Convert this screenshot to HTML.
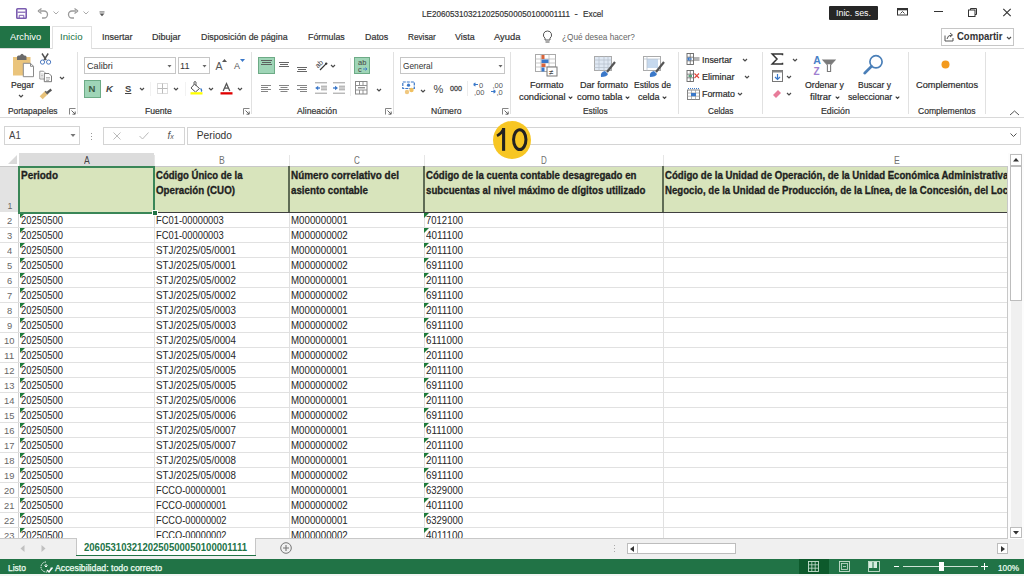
<!DOCTYPE html>
<html><head><meta charset="utf-8"><style>
html,body{margin:0;padding:0;width:1024px;height:576px;overflow:hidden;background:#fff;position:relative;font-family:"Liberation Sans", sans-serif}
.t{position:absolute;white-space:nowrap;font-family:"Liberation Sans", sans-serif}
.s{-webkit-text-stroke:0.2px currentColor}
.r{position:absolute;}
svg.r{overflow:visible}
</style></head><body>
<div class="r" style="left:0px;top:0px;width:1024px;height:26px;background:#fff"></div>
<svg class="r" style="left:16px;top:8px;" width="11" height="11" viewBox="0 0 11 11"><rect x="0.8" y="0.8" width="9.4" height="9.4" rx="0.8" fill="#fff" stroke="#7b5cb0" stroke-width="1.6"/><path d="M1.5 4.2 H9.5" stroke="#7b5cb0" stroke-width="1.2"/><path d="M3.2 10 V7.3 H7.8 V10" fill="none" stroke="#7b5cb0" stroke-width="1"/></svg>
<svg class="r" style="left:37px;top:8px;" width="12" height="11" viewBox="0 0 12 11"><path d="M3 3 H7 A3.5 3.5 0 0 1 7 10 H5" fill="none" stroke="#9a9a9a" stroke-width="1.3"/><path d="M1 3 L4.5 0.5 M1 3 L4.5 5.5" stroke="#9a9a9a" stroke-width="1.3" fill="none"/></svg>
<svg class="r" style="left:53px;top:11px;" width="6" height="4" viewBox="0 0 6 4"><path d="M0.5 0.5 L3 3 L5.5 0.5" fill="none" stroke="#aaa" stroke-width="1"/></svg>
<svg class="r" style="left:67px;top:8px;" width="12" height="11" viewBox="0 0 12 11"><path d="M9 3 H5 A3.5 3.5 0 0 0 5 10 H7" fill="none" stroke="#9a9a9a" stroke-width="1.3"/><path d="M11 3 L7.5 0.5 M11 3 L7.5 5.5" stroke="#9a9a9a" stroke-width="1.3" fill="none"/></svg>
<svg class="r" style="left:83px;top:11px;" width="6" height="4" viewBox="0 0 6 4"><path d="M0.5 0.5 L3 3 L5.5 0.5" fill="none" stroke="#aaa" stroke-width="1"/></svg>
<svg class="r" style="left:99px;top:10.5px;" width="6" height="6" viewBox="0 0 6 6"><rect x="0.5" y="0.5" width="5" height="0.9" fill="#555"/><path d="M0.5 2.5 L5.5 2.5 L3 5.2 Z" fill="#555"/></svg>
<div class="t s" style="left:421.50px;top:9.20px;font-size:9.8px;line-height:9.8px;color:#333;font-weight:normal;transform:scaleX(0.8280);transform-origin:0 0;">LE2060531032120250500050100001111</div>
<div class="t s" style="left:574.60px;top:9.20px;font-size:9.8px;line-height:9.8px;color:#333;font-weight:normal;">-</div>
<div class="t s" style="left:582.60px;top:9.20px;font-size:9.8px;line-height:9.8px;color:#333;font-weight:normal;transform:scaleX(0.8429);transform-origin:0 0;">Excel</div>
<div class="r" style="left:829px;top:6px;width:49px;height:14px;background:#262626;border-radius:1px"></div>
<div class="t" style="left:836.00px;top:9.07px;font-size:8.9px;line-height:8.9px;color:#fff;font-weight:normal;">Inic. ses.</div>
<svg class="r" style="left:897px;top:8px;" width="12" height="8" viewBox="0 0 12 8"><rect x="0.5" y="0.5" width="10" height="6.5" fill="none" stroke="#333" stroke-width="1"/><rect x="0.5" y="0.5" width="10" height="1.8" fill="#333"/><path d="M3.5 5.5 L5.5 3.5 L7.5 5.5" fill="none" stroke="#333" stroke-width="0.9"/></svg>
<div class="r" style="left:934px;top:11px;width:9px;height:1px;background:#333"></div>
<svg class="r" style="left:967px;top:7px;" width="11" height="10" viewBox="0 0 11 10"><rect x="1.5" y="3" width="6.5" height="6.5" fill="none" stroke="#333" stroke-width="1"/><path d="M3.5 3 V1.5 H9.5 V7.5 H8" fill="none" stroke="#333" stroke-width="1"/></svg>
<svg class="r" style="left:1002px;top:8px;" width="10" height="10" viewBox="0 0 10 10"><path d="M1.3 0.8 L8.7 8.2 M8.7 0.8 L1.3 8.2" stroke="#333" stroke-width="1.1"/></svg>
<div class="r" style="left:0px;top:26px;width:50px;height:22px;background:#217346"></div>
<div class="t" style="left:9.50px;top:32.37px;font-size:9.6px;line-height:9.6px;color:#fff;font-weight:normal;transform:scaleX(0.9747);transform-origin:0 0;">Archivo</div>
<div class="r" style="left:52px;top:26px;width:40px;height:23px;background:#fff;border:1px solid #e1e1e1;border-bottom:none;box-sizing:border-box"></div>
<div class="t" style="left:60.30px;top:32.37px;font-size:9.6px;line-height:9.6px;color:#217346;font-weight:normal;transform:scaleX(1.0040);transform-origin:0 0;">Inicio</div>
<div class="t s" style="left:101.90px;top:32.37px;font-size:9.6px;line-height:9.6px;color:#333;font-weight:normal;transform:scaleX(0.9372);transform-origin:0 0;">Insertar</div>
<div class="t s" style="left:151.90px;top:32.37px;font-size:9.6px;line-height:9.6px;color:#333;font-weight:normal;transform:scaleX(0.9404);transform-origin:0 0;">Dibujar</div>
<div class="t s" style="left:201.40px;top:32.37px;font-size:9.6px;line-height:9.6px;color:#333;font-weight:normal;transform:scaleX(0.9220);transform-origin:0 0;">Disposición de página</div>
<div class="t s" style="left:308.00px;top:32.37px;font-size:9.6px;line-height:9.6px;color:#333;font-weight:normal;transform:scaleX(0.9199);transform-origin:0 0;">Fórmulas</div>
<div class="t s" style="left:364.70px;top:32.37px;font-size:9.6px;line-height:9.6px;color:#333;font-weight:normal;transform:scaleX(0.9291);transform-origin:0 0;">Datos</div>
<div class="t s" style="left:407.70px;top:32.37px;font-size:9.6px;line-height:9.6px;color:#333;font-weight:normal;transform:scaleX(0.8543);transform-origin:0 0;">Revisar</div>
<div class="t s" style="left:455.30px;top:32.37px;font-size:9.6px;line-height:9.6px;color:#333;font-weight:normal;transform:scaleX(0.9259);transform-origin:0 0;">Vista</div>
<div class="t s" style="left:494.40px;top:32.37px;font-size:9.6px;line-height:9.6px;color:#333;font-weight:normal;transform:scaleX(0.9762);transform-origin:0 0;">Ayuda</div>
<svg class="r" style="left:542px;top:30px;" width="11" height="14" viewBox="0 0 11 14"><path d="M5.5 1 A4 4 0 0 1 8 8.2 V10 H3 V8.2 A4 4 0 0 1 5.5 1 Z" fill="none" stroke="#555" stroke-width="1"/><path d="M3.5 12 H7.5" stroke="#555" stroke-width="1"/></svg>
<div class="t" style="left:562.30px;top:32.81px;font-size:9.2px;line-height:9.2px;color:#666;font-weight:normal;transform:scaleX(0.8978);transform-origin:0 0;">¿Qué desea hacer?</div>
<div class="r" style="left:941px;top:28px;width:73px;height:18px;background:#fff;border:1px solid #c6c6c6;box-sizing:border-box"></div>
<svg class="r" style="left:944px;top:31px;" width="10" height="11" viewBox="0 0 10 11"><path d="M1 4.5 V10 H9 V7" fill="none" stroke="#555" stroke-width="1"/><path d="M3 8 Q3.5 4 8 4 M6 2 L8.5 4 L6 6" fill="none" stroke="#555" stroke-width="1"/></svg>
<div class="t" style="left:957.00px;top:32.00px;font-size:10.4px;line-height:10.4px;color:#333;font-weight:bold;transform:scaleX(0.9156);transform-origin:0 0;">Compartir</div>
<svg class="r" style="left:1006px;top:36px;" width="6" height="4" viewBox="0 0 6 4"><path d="M1 1 L3 3 L5 1" fill="none" stroke="#4a4a4a" stroke-width="1.2"/></svg>
<div class="r" style="left:0px;top:48px;width:52px;height:1px;background:#d9d9d9"></div>
<div class="r" style="left:92px;top:48px;width:932px;height:1px;background:#d9d9d9"></div>
<div class="r" style="left:0px;top:49px;width:1024px;height:68px;background:#fff"></div>
<div class="r" style="left:0px;top:117px;width:1024px;height:1px;background:#d9d9d9"></div>
<div class="r" style="left:77px;top:52px;width:1px;height:62px;background:#e1e1e1"></div>
<div class="r" style="left:251px;top:52px;width:1px;height:62px;background:#e1e1e1"></div>
<div class="r" style="left:393px;top:52px;width:1px;height:62px;background:#e1e1e1"></div>
<div class="r" style="left:510px;top:52px;width:1px;height:62px;background:#e1e1e1"></div>
<div class="r" style="left:678px;top:52px;width:1px;height:62px;background:#e1e1e1"></div>
<div class="r" style="left:762px;top:52px;width:1px;height:62px;background:#e1e1e1"></div>
<div class="r" style="left:908px;top:52px;width:1px;height:62px;background:#e1e1e1"></div>
<div class="r" style="left:985px;top:52px;width:1px;height:62px;background:#e1e1e1"></div>
<div class="t s" style="left:8.00px;top:107.18px;font-size:9.0px;line-height:9.0px;color:#333;font-weight:normal;transform:scaleX(0.9334);transform-origin:0 0;">Portapapeles</div>
<div class="t s" style="left:144.80px;top:107.18px;font-size:9.0px;line-height:9.0px;color:#333;font-weight:normal;transform:scaleX(0.9566);transform-origin:0 0;">Fuente</div>
<div class="t s" style="left:296.60px;top:107.18px;font-size:9.0px;line-height:9.0px;color:#333;font-weight:normal;transform:scaleX(0.9632);transform-origin:0 0;">Alineación</div>
<div class="t s" style="left:431.00px;top:107.18px;font-size:9.0px;line-height:9.0px;color:#333;font-weight:normal;transform:scaleX(0.9529);transform-origin:0 0;">Número</div>
<div class="t s" style="left:583.00px;top:107.18px;font-size:9.0px;line-height:9.0px;color:#333;font-weight:normal;transform:scaleX(0.9280);transform-origin:0 0;">Estilos</div>
<div class="t s" style="left:708.00px;top:107.18px;font-size:9.0px;line-height:9.0px;color:#333;font-weight:normal;transform:scaleX(0.9067);transform-origin:0 0;">Celdas</div>
<div class="t s" style="left:820.80px;top:107.18px;font-size:9.0px;line-height:9.0px;color:#333;font-weight:normal;transform:scaleX(0.9757);transform-origin:0 0;">Edición</div>
<div class="t s" style="left:918.00px;top:107.18px;font-size:9.0px;line-height:9.0px;color:#333;font-weight:normal;transform:scaleX(0.9517);transform-origin:0 0;">Complementos</div>
<svg class="r" style="left:69px;top:108px;" width="7" height="7" viewBox="0 0 7 7"><path d="M0.5 6.5 V0.5 H6.5" fill="none" stroke="#777" stroke-width="0.9"/><path d="M2.5 2.5 L6 6 M3.5 6.2 H6.2 V3.5" fill="none" stroke="#555" stroke-width="0.9"/></svg>
<svg class="r" style="left:243px;top:108px;" width="7" height="7" viewBox="0 0 7 7"><path d="M0.5 6.5 V0.5 H6.5" fill="none" stroke="#777" stroke-width="0.9"/><path d="M2.5 2.5 L6 6 M3.5 6.2 H6.2 V3.5" fill="none" stroke="#555" stroke-width="0.9"/></svg>
<svg class="r" style="left:385px;top:108px;" width="7" height="7" viewBox="0 0 7 7"><path d="M0.5 6.5 V0.5 H6.5" fill="none" stroke="#777" stroke-width="0.9"/><path d="M2.5 2.5 L6 6 M3.5 6.2 H6.2 V3.5" fill="none" stroke="#555" stroke-width="0.9"/></svg>
<svg class="r" style="left:502px;top:108px;" width="7" height="7" viewBox="0 0 7 7"><path d="M0.5 6.5 V0.5 H6.5" fill="none" stroke="#777" stroke-width="0.9"/><path d="M2.5 2.5 L6 6 M3.5 6.2 H6.2 V3.5" fill="none" stroke="#555" stroke-width="0.9"/></svg>
<svg class="r" style="left:12px;top:53px;" width="24" height="26" viewBox="0 0 24 26"><rect x="1" y="4" width="17.5" height="18.5" fill="#eac47c"/><path d="M5 7 V4 Q5 2.5 6.5 2.5 H8 Q9 0.8 10 0.8 Q11 0.8 12 2.5 H13 Q14.5 2.5 14.5 4 V7 Z" fill="#6a6a6a"/><path d="M11.3 10.3 H18.5 L21.5 13.3 V23.7 H11.3 Z" fill="#fff" stroke="#8a8a8a" stroke-width="1"/><path d="M18.5 10.3 V13.3 H21.5" fill="none" stroke="#8a8a8a" stroke-width="1"/></svg>
<div class="t s" style="left:10.60px;top:80.30px;font-size:9.8px;line-height:9.8px;color:#2b2b2b;font-weight:normal;transform:scaleX(0.8796);transform-origin:0 0;">Pegar</div>
<svg class="r" style="left:18px;top:94px;" width="6" height="4" viewBox="0 0 6 4"><path d="M1 1 L3 3 L5 1" fill="none" stroke="#4a4a4a" stroke-width="1.2"/></svg>
<svg class="r" style="left:39px;top:52px;" width="12" height="13" viewBox="0 0 12 13"><path d="M3 1.5 L7.2 8 M9.2 1.5 L5 8" stroke="#505050" stroke-width="1.4"/><circle cx="3.5" cy="10.1" r="2.1" fill="none" stroke="#4a78c0" stroke-width="1"/><circle cx="9.6" cy="10.1" r="2.1" fill="none" stroke="#4a78c0" stroke-width="1"/></svg>
<svg class="r" style="left:39px;top:70px;" width="14" height="13" viewBox="0 0 14 13"><path d="M0.8 1.2 H4.5 L6 2.7 V9 H0.8 Z" fill="#fff" stroke="#8a8a8a" stroke-width="0.9"/><path d="M2 4 H4 M2 5.5 H4 M2 7 H4" stroke="#aaa" stroke-width="0.7"/><path d="M5.3 3.5 H10 L12.5 6 V11.7 H5.3 Z" fill="#fff" stroke="#6a6a6a" stroke-width="0.9"/><path d="M7 7.5 H11 M7 9 H11 M7 10.5 H10" stroke="#999" stroke-width="0.7"/></svg>
<svg class="r" style="left:59px;top:76px;" width="6" height="4" viewBox="0 0 6 4"><path d="M1 1 L3 3 L5 1" fill="none" stroke="#4a4a4a" stroke-width="1.2"/></svg>
<svg class="r" style="left:40px;top:88px;" width="13" height="11" viewBox="0 0 13 11"><path d="M1.2 9.8 L6.8 4.2" stroke="#e8c27a" stroke-width="4.2"/><path d="M6.5 5.3 L11.3 1.5" stroke="#555" stroke-width="2.3"/><path d="M5.2 3.2 L8 6" stroke="#666" stroke-width="1.5"/></svg>
<div class="r" style="left:84px;top:57px;width:92px;height:17px;background:#fff;border:1px solid #c6c6c6;box-sizing:border-box"></div>
<div class="t" style="left:86.60px;top:60.90px;font-size:9.8px;line-height:9.8px;color:#333;font-weight:normal;transform:scaleX(0.9290);transform-origin:0 0;">Calibri</div>
<svg class="r" style="left:167px;top:64.5px;" width="5" height="3" viewBox="0 0 5 3"><path d="M0.5 0 H4.5 L2.5 2.5 Z" fill="#666"/></svg>
<div class="r" style="left:177.5px;top:57px;width:32px;height:17px;background:#fff;border:1px solid #c6c6c6;box-sizing:border-box"></div>
<div class="t" style="left:180.00px;top:61.51px;font-size:9.2px;line-height:9.2px;color:#333;font-weight:normal;">11</div>
<svg class="r" style="left:202px;top:64.5px;" width="5" height="3" viewBox="0 0 5 3"><path d="M0.5 0 H4.5 L2.5 2.5 Z" fill="#666"/></svg>
<div class="t" style="left:215.50px;top:61.11px;font-size:10.5px;line-height:10.5px;color:#555;font-weight:normal;">A</div>
<svg class="r" style="left:222px;top:59px;" width="5" height="3" viewBox="0 0 5 3"><path d="M0 3 L2.5 0 L5 3 Z" fill="#555"/></svg>
<div class="t" style="left:234.00px;top:62.38px;font-size:9px;line-height:9px;color:#555;font-weight:normal;">A</div>
<svg class="r" style="left:240px;top:59px;" width="5" height="3" viewBox="0 0 5 3"><path d="M0 0 H5 L2.5 3 Z" fill="#3a78c9"/></svg>
<div class="r" style="left:84px;top:80px;width:16.5px;height:17.5px;background:#9fd5b7;border:1px solid #6dab86;box-sizing:border-box"></div>
<div class="t" style="left:88.50px;top:84.46px;font-size:9.5px;line-height:9.5px;color:#3a5a45;font-weight:bold;">N</div>
<div class="t" style="left:106.00px;top:84.46px;font-size:9.5px;line-height:9.5px;color:#444;font-weight:bold;font-style:italic">K</div>
<div class="t" style="left:125.00px;top:84.46px;font-size:9.5px;line-height:9.5px;color:#444;font-weight:bold;text-decoration:underline">S</div>
<svg class="r" style="left:139px;top:87px;" width="6" height="4" viewBox="0 0 6 4"><path d="M1 1 L3 3 L5 1" fill="none" stroke="#4a4a4a" stroke-width="1.2"/></svg>
<svg class="r" style="left:172.5px;top:87px;" width="6" height="4" viewBox="0 0 6 4"><path d="M1 1 L3 3 L5 1" fill="none" stroke="#4a4a4a" stroke-width="1.2"/></svg>
<svg class="r" style="left:207.5px;top:87px;" width="6" height="4" viewBox="0 0 6 4"><path d="M1 1 L3 3 L5 1" fill="none" stroke="#4a4a4a" stroke-width="1.2"/></svg>
<svg class="r" style="left:237px;top:87px;" width="6" height="4" viewBox="0 0 6 4"><path d="M1 1 L3 3 L5 1" fill="none" stroke="#4a4a4a" stroke-width="1.2"/></svg>
<div class="r" style="left:150px;top:82px;width:1px;height:14px;background:#f2f2f2"></div>
<div class="r" style="left:185px;top:82px;width:1px;height:14px;background:#f2f2f2"></div>
<svg class="r" style="left:157px;top:83px;" width="11" height="11" viewBox="0 0 11 11"><rect x="0.5" y="0.5" width="10" height="10" fill="none" stroke="#bbb" stroke-width="1" stroke-dasharray="1 1"/><path d="M5.5 0.5 V10.5 M0.5 5.5 H10.5" stroke="#bbb" stroke-width="1"/></svg>
<svg class="r" style="left:190px;top:81px;" width="13" height="14" viewBox="0 0 13 14"><path d="M4.5 3 L9.5 7.5 L5.5 11 L1 7 Z" fill="#fff" stroke="#555" stroke-width="1"/><path d="M4 3.5 V1 Q5 0 6 1 V5" fill="none" stroke="#555" stroke-width="0.9"/><path d="M10.5 7.5 Q12.5 9.5 11 10.5" fill="none" stroke="#3a78c9" stroke-width="1.3"/><rect x="0.5" y="11.2" width="12" height="2.3" fill="#ffff00"/></svg>
<svg class="r" style="left:220px;top:81px;" width="13" height="14" viewBox="0 0 13 14"><path d="M3.2 10 L6.5 2.5 L9.8 10 M4.6 7.2 H8.4" fill="none" stroke="#555" stroke-width="1.3"/><rect x="0.5" y="11.2" width="12" height="2.3" fill="#e00000"/></svg>
<div class="r" style="left:258px;top:57px;width:16.5px;height:17px;background:#9fd5b7;border:1px solid #6dab86;box-sizing:border-box"></div>
<svg class="r" style="left:258px;top:57px;" width="17" height="17" viewBox="0 0 17 17"><path d="M3 3.5 H14 M4 5.5 H13 M3 7.5 H14" stroke="#555" stroke-width="0.9"/></svg>
<svg class="r" style="left:278px;top:60px;" width="12" height="10" viewBox="0 0 12 10"><path d="M1 2.5 H11 M2 4.5 H10 M1 6.5 H11" stroke="#555" stroke-width="0.9"/></svg>
<svg class="r" style="left:296px;top:63px;" width="12" height="10" viewBox="0 0 12 10"><path d="M1 4.5 H11 M2 6.5 H10 M1 8.5 H11" stroke="#555" stroke-width="0.9"/></svg>
<svg class="r" style="left:314px;top:58px;" width="14" height="13" viewBox="0 0 14 13"><text x="1" y="8.5" font-size="7.2" font-family="Liberation Sans" fill="#333" transform="rotate(-45 5 6)">ab</text><path d="M6 12 L12 5.8" stroke="#333" stroke-width="1.2"/><circle cx="12.2" cy="5.6" r="1.2" fill="#333"/></svg>
<svg class="r" style="left:330px;top:63.5px;" width="6" height="4" viewBox="0 0 6 4"><path d="M1 1 L3 3 L5 1" fill="none" stroke="#4a4a4a" stroke-width="1.2"/></svg>
<svg class="r" style="left:260px;top:84px;" width="12" height="9" viewBox="0 0 12 9"><path d="M1 1.5 H11 M1 3.5 H8 M1 5.5 H11 M1 7.5 H8" stroke="#777" stroke-width="0.9"/></svg>
<svg class="r" style="left:278px;top:84px;" width="12" height="9" viewBox="0 0 12 9"><path d="M1 1.5 H11 M2.5 3.5 H9.5 M1 5.5 H11 M2.5 7.5 H9.5" stroke="#777" stroke-width="0.9"/></svg>
<svg class="r" style="left:296px;top:84px;" width="12" height="9" viewBox="0 0 12 9"><path d="M1 1.5 H11 M4 3.5 H11 M1 5.5 H11 M4 7.5 H11" stroke="#777" stroke-width="0.9"/></svg>
<svg class="r" style="left:314px;top:82px;" width="14" height="12" viewBox="0 0 14 12"><path d="M1 0.8 H13 M7 4.2 H13 M7 6 H13 M7 7.8 H13 M1 11.2 H13" stroke="#7a7a7a" stroke-width="0.75"/><path d="M1.2 6 L4.2 3.8 V8.2 Z" fill="#3a78c9"/><path d="M3.5 6 H6" stroke="#3a78c9" stroke-width="1.3"/></svg>
<svg class="r" style="left:332px;top:82px;" width="14" height="12" viewBox="0 0 14 12"><path d="M1 0.8 H13 M7 4.2 H13 M7 6 H13 M7 7.8 H13 M1 11.2 H13" stroke="#7a7a7a" stroke-width="0.75"/><path d="M6 6 L3 3.8 V8.2 Z" fill="#3a78c9"/><path d="M1 6 H3.5" stroke="#3a78c9" stroke-width="1.3"/></svg>
<div class="r" style="left:350px;top:58px;width:1px;height:38px;background:#ececec"></div>
<div class="r" style="left:353.5px;top:57px;width:16.5px;height:17px;background:#9fd5b7;border:1px solid #6dab86;box-sizing:border-box"></div>
<svg class="r" style="left:353.5px;top:57px;" width="17" height="17" viewBox="0 0 17 17"><text x="4" y="8" font-size="7.5" font-family="Liberation Sans" fill="#444">ab</text><text x="4" y="14.5" font-size="7.5" font-family="Liberation Sans" fill="#444">c</text><path d="M9 12 H13 L11.5 10.5 M13 12 L11.5 13.5" stroke="#3a78c9" stroke-width="0.9" fill="none"/></svg>
<svg class="r" style="left:355px;top:81px;" width="13" height="14" viewBox="0 0 13 14"><rect x="0.5" y="0.5" width="11.5" height="12.5" fill="#fff" stroke="#888" stroke-width="1"/><path d="M0.5 4.5 H12 M0.5 9 H12 M4.5 0.5 V4.5 M8 0.5 V4.5 M4.5 9 V13 M8 9 V13" stroke="#888" stroke-width="0.9"/><path d="M3 6.8 H10" stroke="#555" stroke-width="0.9"/></svg>
<svg class="r" style="left:376px;top:88px;" width="6" height="4" viewBox="0 0 6 4"><path d="M1 1 L3 3 L5 1" fill="none" stroke="#4a4a4a" stroke-width="1.2"/></svg>
<div class="r" style="left:400px;top:57px;width:105px;height:17px;background:#fff;border:1px solid #c6c6c6;box-sizing:border-box"></div>
<div class="t" style="left:403.00px;top:61.00px;font-size:9.8px;line-height:9.8px;color:#333;font-weight:normal;transform:scaleX(0.8462);transform-origin:0 0;">General</div>
<svg class="r" style="left:498px;top:64.5px;" width="5" height="3" viewBox="0 0 5 3"><path d="M0.5 0 H4.5 L2.5 2.5 Z" fill="#666"/></svg>
<svg class="r" style="left:402px;top:81px;" width="14" height="14" viewBox="0 0 14 14"><rect x="0.8" y="1" width="11.5" height="6.5" fill="#fff" stroke="#3a78c9" stroke-width="1.2" stroke-dasharray="3 1"/><circle cx="6.5" cy="4.2" r="1.6" fill="#3a78c9"/><circle cx="5" cy="11" r="2.2" fill="#f0c880"/><circle cx="9.5" cy="9" r="2.2" fill="#f0c060"/></svg>
<svg class="r" style="left:420px;top:89px;" width="6" height="4" viewBox="0 0 6 4"><path d="M1 1 L3 3 L5 1" fill="none" stroke="#4a4a4a" stroke-width="1.2"/></svg>
<div class="t" style="left:433.50px;top:83.69px;font-size:11px;line-height:11px;color:#444;font-weight:normal;">%</div>
<div class="t" style="left:450.00px;top:84.77px;font-size:7.6px;line-height:7.6px;color:#444;font-weight:normal;transform:scaleX(0.9465);transform-origin:0 0;-webkit-text-stroke:0.3px #444">000</div>
<div class="r" style="left:467px;top:81px;width:1px;height:15px;background:#ececec"></div>
<svg class="r" style="left:472px;top:81px;" width="14" height="15" viewBox="0 0 14 15"><text x="7" y="7" font-size="7.5" font-family="Liberation Sans" fill="#555">0</text><text x="2" y="13.5" font-size="7.5" font-family="Liberation Sans" fill="#555">,00</text><path d="M1.5 3.5 H6 M1.5 3.5 L3.5 1.8 M1.5 3.5 L3.5 5.2" stroke="#3a78c9" stroke-width="1.1" fill="none"/></svg>
<svg class="r" style="left:490px;top:81px;" width="14" height="15" viewBox="0 0 14 15"><text x="2.5" y="7" font-size="7.5" font-family="Liberation Sans" fill="#555">,00</text><text x="6.5" y="13.5" font-size="7.5" font-family="Liberation Sans" fill="#555">,0</text><path d="M1 10.5 H5.5 M5.5 10.5 L3.5 8.8 M5.5 10.5 L3.5 12.2" stroke="#3a78c9" stroke-width="1.1" fill="none"/></svg>
<svg class="r" style="left:535px;top:54px;" width="23" height="23" viewBox="0 0 23 23"><rect x="0.5" y="0.5" width="20" height="17" fill="#fff" stroke="#aaa" stroke-width="1"/><path d="M0.5 5 H20.5 M0.5 9 H20.5 M0.5 13 H20.5 M6 0.5 V17.5 M14 0.5 V17.5" stroke="#bbb" stroke-width="0.8"/><rect x="6.5" y="1" width="3" height="4" fill="#d9643a"/><rect x="6.5" y="5.5" width="7" height="3.5" fill="#3a78c9"/><rect x="6.5" y="9.5" width="4" height="3.5" fill="#d9643a"/><rect x="6.5" y="13.5" width="3" height="4" fill="#3a78c9"/><rect x="12" y="13" width="10" height="9" fill="#fff" stroke="#777" stroke-width="1"/><text x="14" y="20.5" font-size="8" font-family="Liberation Sans" fill="#444">≠</text></svg>
<div class="t s" style="left:529.80px;top:80.30px;font-size:9.8px;line-height:9.8px;color:#2b2b2b;font-weight:normal;transform:scaleX(0.9182);transform-origin:0 0;">Formato</div>
<div class="t s" style="left:518.70px;top:92.00px;font-size:9.8px;line-height:9.8px;color:#2b2b2b;font-weight:normal;transform:scaleX(0.9504);transform-origin:0 0;">condicional</div>
<svg class="r" style="left:568px;top:96px;" width="5" height="3" viewBox="0 0 5 3"><path d="M0.7 0.7 L2.5 2.5 L4.3 0.7" fill="none" stroke="#3a3a3a" stroke-width="1.15"/></svg>
<svg class="r" style="left:594px;top:56px;" width="23" height="22" viewBox="0 0 23 22"><rect x="0.5" y="0.5" width="17" height="14" fill="#dfe8f3" stroke="#aaa" stroke-width="1"/><path d="M0.5 4 H17.5 M0.5 8 H17.5 M0.5 11.5 H17.5 M5 0.5 V14.5 M10 0.5 V14.5 M14 0.5 V14.5" stroke="#b9c3ce" stroke-width="0.8"/><path d="M7 21 Q6 16 11 15 L14 18 Q13 21 7 21 Z" fill="#3a78c9"/><path d="M13 16 L21 6" stroke="#555" stroke-width="2.2"/></svg>
<div class="t s" style="left:580.40px;top:80.30px;font-size:9.8px;line-height:9.8px;color:#2b2b2b;font-weight:normal;transform:scaleX(0.9278);transform-origin:0 0;">Dar formato</div>
<div class="t s" style="left:577.30px;top:92.00px;font-size:9.8px;line-height:9.8px;color:#2b2b2b;font-weight:normal;transform:scaleX(0.9492);transform-origin:0 0;">como tabla</div>
<svg class="r" style="left:625px;top:96px;" width="5" height="3" viewBox="0 0 5 3"><path d="M0.7 0.7 L2.5 2.5 L4.3 0.7" fill="none" stroke="#3a3a3a" stroke-width="1.15"/></svg>
<svg class="r" style="left:643px;top:56px;" width="23" height="22" viewBox="0 0 23 22"><rect x="0.5" y="0.5" width="17" height="14" fill="#fff" stroke="#aaa" stroke-width="1"/><rect x="4" y="3" width="11" height="9" fill="#c6d9ee"/><path d="M0.5 3 H17.5 M4 0.5 V14.5" stroke="#b9c3ce" stroke-width="0.8"/><path d="M7 21 Q6 16 11 15 L14 18 Q13 21 7 21 Z" fill="#3a78c9"/><path d="M13 16 L21 6" stroke="#555" stroke-width="2.2"/></svg>
<div class="t s" style="left:634.40px;top:80.30px;font-size:9.8px;line-height:9.8px;color:#2b2b2b;font-weight:normal;transform:scaleX(0.8709);transform-origin:0 0;">Estilos de</div>
<div class="t s" style="left:638.20px;top:92.00px;font-size:9.8px;line-height:9.8px;color:#2b2b2b;font-weight:normal;transform:scaleX(0.9220);transform-origin:0 0;">celda</div>
<svg class="r" style="left:662px;top:96px;" width="5" height="3" viewBox="0 0 5 3"><path d="M0.7 0.7 L2.5 2.5 L4.3 0.7" fill="none" stroke="#3a3a3a" stroke-width="1.15"/></svg>
<svg class="r" style="left:686px;top:53px;" width="14" height="12" viewBox="0 0 14 12"><rect x="1" y="0.5" width="6.5" height="11" fill="#fff" stroke="#666" stroke-width="0.9"/><path d="M1 4.2 H7.5 M1 7.8 H7.5 M4.25 0.5 V11.5" stroke="#666" stroke-width="0.8"/><path d="M8 5 H13.5 M8 7 H13.5" stroke="#555" stroke-width="0.9"/><path d="M1.5 6 H6 M1.5 6 L3.5 4.3 M1.5 6 L3.5 7.7" stroke="#3a78c9" stroke-width="1.1" fill="none"/></svg>
<div class="t s" style="left:701.50px;top:55.00px;font-size:9.8px;line-height:9.8px;color:#2b2b2b;font-weight:normal;transform:scaleX(0.9031);transform-origin:0 0;">Insertar</div>
<svg class="r" style="left:742px;top:58px;" width="6" height="4" viewBox="0 0 6 4"><path d="M1 1 L3 3 L5 1" fill="none" stroke="#4a4a4a" stroke-width="1.2"/></svg>
<svg class="r" style="left:686px;top:70px;" width="14" height="12" viewBox="0 0 14 12"><rect x="1" y="0.5" width="6.5" height="11" fill="#fff" stroke="#666" stroke-width="0.9"/><path d="M1 4.2 H7.5 M1 7.8 H7.5 M4.25 0.5 V11.5" stroke="#666" stroke-width="0.8"/><rect x="2.5" y="5" width="3.5" height="2" fill="#5aa27a"/><path d="M8.5 3.5 L13 8 M13 3.5 L8.5 8" stroke="#e0443a" stroke-width="1.1"/></svg>
<div class="t s" style="left:701.50px;top:72.00px;font-size:9.8px;line-height:9.8px;color:#2b2b2b;font-weight:normal;transform:scaleX(0.9182);transform-origin:0 0;">Eliminar</div>
<svg class="r" style="left:743.5px;top:75px;" width="6" height="4" viewBox="0 0 6 4"><path d="M1 1 L3 3 L5 1" fill="none" stroke="#4a4a4a" stroke-width="1.2"/></svg>
<svg class="r" style="left:687px;top:87px;" width="13" height="13" viewBox="0 0 13 13"><path d="M1 1.5 H12" stroke="#3a78c9" stroke-width="1" stroke-dasharray="1 1"/><rect x="0.5" y="3" width="12" height="9.5" fill="#fff" stroke="#777" stroke-width="0.9"/><path d="M0.5 6 H12.5 M0.5 9.2 H12.5 M4.5 3 V12.5 M8.5 3 V12.5" stroke="#999" stroke-width="0.7"/><rect x="4" y="6" width="5" height="3.2" fill="#3a78c9"/></svg>
<div class="t s" style="left:701.80px;top:89.00px;font-size:9.8px;line-height:9.8px;color:#2b2b2b;font-weight:normal;transform:scaleX(0.9045);transform-origin:0 0;">Formato</div>
<svg class="r" style="left:737px;top:91.5px;" width="6" height="4" viewBox="0 0 6 4"><path d="M1 1 L3 3 L5 1" fill="none" stroke="#4a4a4a" stroke-width="1.2"/></svg>
<svg class="r" style="left:771px;top:53px;" width="13" height="12" viewBox="0 0 13 12"><path d="M11.5 2.2 V1 H1.2 L6 6 L1.2 11 H11.5 V9.8" fill="none" stroke="#333" stroke-width="1.5"/></svg>
<svg class="r" style="left:791.5px;top:58px;" width="6" height="4" viewBox="0 0 6 4"><path d="M1 1 L3 3 L5 1" fill="none" stroke="#4a4a4a" stroke-width="1.2"/></svg>
<svg class="r" style="left:772px;top:70px;" width="11" height="12" viewBox="0 0 11 12"><rect x="0.5" y="0.5" width="10" height="11" fill="#fff" stroke="#777" stroke-width="1"/><rect x="0.5" y="0.5" width="10" height="2" fill="#888"/><path d="M5.5 4 V9.5 M3 7 L5.5 9.5 L8 7" stroke="#3a78c9" stroke-width="1.2" fill="none"/></svg>
<svg class="r" style="left:786px;top:75px;" width="6" height="4" viewBox="0 0 6 4"><path d="M1 1 L3 3 L5 1" fill="none" stroke="#4a4a4a" stroke-width="1.2"/></svg>
<svg class="r" style="left:772px;top:88px;" width="11" height="10" viewBox="0 0 11 10"><path d="M1 7 L6 2 L9 5 L4 10 Z" fill="#e87c9a"/></svg>
<svg class="r" style="left:786px;top:91.5px;" width="6" height="4" viewBox="0 0 6 4"><path d="M1 1 L3 3 L5 1" fill="none" stroke="#4a4a4a" stroke-width="1.2"/></svg>
<svg class="r" style="left:812px;top:54px;" width="24" height="22" viewBox="0 0 24 22"><text x="1.3" y="9.5" font-size="10.5" font-weight="bold" font-family="Liberation Sans" fill="#4a82c8">A</text><text x="1.5" y="20.5" font-size="10" font-weight="bold" font-family="Liberation Sans" fill="#a07fd0">Z</text><path d="M11 6 H23 L18.6 11 V17.5 L15.4 17.5 V11 Z" fill="#fff" stroke="#7a7a7a" stroke-width="1.1"/><path d="M11 6 H23 L19 10.2 H15 Z" fill="#7a7a7a"/></svg>
<div class="t s" style="left:805.40px;top:80.30px;font-size:9.8px;line-height:9.8px;color:#2b2b2b;font-weight:normal;transform:scaleX(0.8951);transform-origin:0 0;">Ordenar y</div>
<div class="t s" style="left:810.10px;top:92.00px;font-size:9.8px;line-height:9.8px;color:#2b2b2b;font-weight:normal;transform:scaleX(0.9736);transform-origin:0 0;">filtrar</div>
<svg class="r" style="left:834.5px;top:96px;" width="5" height="3" viewBox="0 0 5 3"><path d="M0.7 0.7 L2.5 2.5 L4.3 0.7" fill="none" stroke="#3a3a3a" stroke-width="1.15"/></svg>
<svg class="r" style="left:862px;top:54px;" width="22" height="21" viewBox="0 0 22 21"><circle cx="14" cy="7.8" r="6.1" fill="none" stroke="#4a7fb8" stroke-width="1.7"/><path d="M9.6 12.3 L2.6 19.2" stroke="#4a7fb8" stroke-width="2.6" stroke-linecap="round"/></svg>
<div class="t s" style="left:858.10px;top:80.30px;font-size:9.8px;line-height:9.8px;color:#2b2b2b;font-weight:normal;transform:scaleX(0.8656);transform-origin:0 0;">Buscar y</div>
<div class="t s" style="left:848.00px;top:92.00px;font-size:9.8px;line-height:9.8px;color:#2b2b2b;font-weight:normal;transform:scaleX(0.8917);transform-origin:0 0;">seleccionar</div>
<svg class="r" style="left:894.5px;top:96px;" width="5" height="3" viewBox="0 0 5 3"><path d="M0.7 0.7 L2.5 2.5 L4.3 0.7" fill="none" stroke="#3a3a3a" stroke-width="1.15"/></svg>
<svg class="r" style="left:941px;top:60px;" width="9" height="9" viewBox="0 0 9 9"><circle cx="4.5" cy="4.5" r="4" fill="#f39a1d"/></svg>
<div class="t s" style="left:915.80px;top:80.40px;font-size:9.8px;line-height:9.8px;color:#2b2b2b;font-weight:normal;transform:scaleX(0.9408);transform-origin:0 0;">Complementos</div>
<svg class="r" style="left:1008.5px;top:109.5px;" width="11" height="6" viewBox="0 0 11 6"><path d="M1 5 L5.5 1 L10 5" fill="none" stroke="#555" stroke-width="1"/></svg>
<div class="r" style="left:0px;top:118px;width:1024px;height:35px;background:#fff"></div>
<div class="r" style="left:4px;top:126px;width:76px;height:19px;background:#fff;border:1px solid #d4d4d4;box-sizing:border-box"></div>
<div class="t" style="left:9.30px;top:130.80px;font-size:10.4px;line-height:10.4px;color:#444;font-weight:normal;transform:scaleX(0.9276);transform-origin:0 0;">A1</div>
<svg class="r" style="left:70px;top:133.5px;" width="6" height="4" viewBox="0 0 6 4"><path d="M0.5 0 H5.5 L3 3 Z" fill="#777"/></svg>
<div class="r" style="left:91px;top:132.5px;width:1.2px;height:1.2px;background:#999"></div>
<div class="r" style="left:91px;top:135.5px;width:1.2px;height:1.2px;background:#999"></div>
<div class="r" style="left:91px;top:138.5px;width:1.2px;height:1.2px;background:#999"></div>
<div class="r" style="left:102.5px;top:126.5px;width:82.5px;height:18.5px;background:#fff;border:1px solid #d4d4d4;box-sizing:border-box"></div>
<svg class="r" style="left:113px;top:132px;" width="8" height="8" viewBox="0 0 8 8"><path d="M0.5 0.5 L7.5 7.5 M7.5 0.5 L0.5 7.5" stroke="#bbb" stroke-width="1"/></svg>
<svg class="r" style="left:139px;top:132px;" width="10" height="8" viewBox="0 0 10 8"><path d="M0.5 4 L3.5 7 L9.5 0.5" fill="none" stroke="#bbb" stroke-width="1"/></svg>
<div class="t" style="left:167.50px;top:131.03px;font-size:10px;line-height:10px;color:#555;font-weight:normal;font-family:"Liberation Serif",serif"><i>f</i><span style="font-size:7px"><i>x</i></span></div>
<div class="r" style="left:187px;top:126.5px;width:834px;height:18.5px;background:#fff;border:1px solid #d4d4d4;box-sizing:border-box"></div>
<div class="t" style="left:196.80px;top:131.27px;font-size:10.2px;line-height:10.2px;color:#333;font-weight:normal;">Periodo</div>
<svg class="r" style="left:1010px;top:133px;" width="7" height="5" viewBox="0 0 7 5"><path d="M0.5 0.5 L3.5 3.5 L6.5 0.5" fill="none" stroke="#555" stroke-width="1"/></svg>
<div class="r" style="left:0px;top:153px;width:1008px;height:385px;background:#fff"></div>
<div class="r" style="left:19px;top:153px;width:135px;height:14px;background:#dcdcdc"></div>
<div class="t" style="left:83.60px;top:154.63px;font-size:10.6px;line-height:10.6px;color:#444;font-weight:normal;transform:scaleX(0.8203);transform-origin:0 0;">A</div>
<div class="t" style="left:218.60px;top:154.63px;font-size:10.6px;line-height:10.6px;color:#707070;font-weight:normal;transform:scaleX(0.8203);transform-origin:0 0;">B</div>
<div class="t" style="left:353.60px;top:154.63px;font-size:10.6px;line-height:10.6px;color:#707070;font-weight:normal;transform:scaleX(0.7577);transform-origin:0 0;">C</div>
<div class="t" style="left:540.60px;top:154.63px;font-size:10.6px;line-height:10.6px;color:#707070;font-weight:normal;transform:scaleX(0.7577);transform-origin:0 0;">D</div>
<div class="t" style="left:894.10px;top:154.63px;font-size:10.6px;line-height:10.6px;color:#707070;font-weight:normal;transform:scaleX(0.8203);transform-origin:0 0;">E</div>
<div class="r" style="left:154px;top:155px;width:1px;height:12px;background:#e6e6e6"></div>
<div class="r" style="left:289px;top:155px;width:1px;height:12px;background:#e6e6e6"></div>
<div class="r" style="left:424px;top:155px;width:1px;height:12px;background:#e6e6e6"></div>
<div class="r" style="left:663px;top:155px;width:1px;height:12px;background:#e6e6e6"></div>
<div class="r" style="left:0px;top:166px;width:1008px;height:1px;background:#c8c8c8"></div>
<svg class="r" style="left:7px;top:155px;" width="11" height="10" viewBox="0 0 11 10"><path d="M10 0 L10 9 L1 9 Z" fill="#d9d9d9"/></svg>
<div class="r" style="left:0px;top:167px;width:19px;height:45px;background:#e3e3e3"></div>
<div class="r" style="left:18px;top:166px;width:1px;height:372px;background:#d0d0d0"></div>
<div class="r" style="left:19px;top:167px;width:989px;height:45px;background:#d8e4bc"></div>
<div class="r" style="left:0px;top:227px;width:1008px;height:1px;background:#e1e1e1"></div>
<div class="r" style="left:0px;top:242px;width:1008px;height:1px;background:#e1e1e1"></div>
<div class="r" style="left:0px;top:257px;width:1008px;height:1px;background:#e1e1e1"></div>
<div class="r" style="left:0px;top:272px;width:1008px;height:1px;background:#e1e1e1"></div>
<div class="r" style="left:0px;top:287px;width:1008px;height:1px;background:#e1e1e1"></div>
<div class="r" style="left:0px;top:302px;width:1008px;height:1px;background:#e1e1e1"></div>
<div class="r" style="left:0px;top:317px;width:1008px;height:1px;background:#e1e1e1"></div>
<div class="r" style="left:0px;top:332px;width:1008px;height:1px;background:#e1e1e1"></div>
<div class="r" style="left:0px;top:347px;width:1008px;height:1px;background:#e1e1e1"></div>
<div class="r" style="left:0px;top:362px;width:1008px;height:1px;background:#e1e1e1"></div>
<div class="r" style="left:0px;top:377px;width:1008px;height:1px;background:#e1e1e1"></div>
<div class="r" style="left:0px;top:392px;width:1008px;height:1px;background:#e1e1e1"></div>
<div class="r" style="left:0px;top:407px;width:1008px;height:1px;background:#e1e1e1"></div>
<div class="r" style="left:0px;top:422px;width:1008px;height:1px;background:#e1e1e1"></div>
<div class="r" style="left:0px;top:437px;width:1008px;height:1px;background:#e1e1e1"></div>
<div class="r" style="left:0px;top:452px;width:1008px;height:1px;background:#e1e1e1"></div>
<div class="r" style="left:0px;top:467px;width:1008px;height:1px;background:#e1e1e1"></div>
<div class="r" style="left:0px;top:482px;width:1008px;height:1px;background:#e1e1e1"></div>
<div class="r" style="left:0px;top:497px;width:1008px;height:1px;background:#e1e1e1"></div>
<div class="r" style="left:0px;top:512px;width:1008px;height:1px;background:#e1e1e1"></div>
<div class="r" style="left:0px;top:527px;width:1008px;height:1px;background:#e1e1e1"></div>
<div class="r" style="left:0px;top:542px;width:1008px;height:1px;background:#e1e1e1"></div>
<div class="r" style="left:154px;top:212px;width:1px;height:326px;background:#e1e1e1"></div>
<div class="r" style="left:289px;top:212px;width:1px;height:326px;background:#e1e1e1"></div>
<div class="r" style="left:424px;top:212px;width:1px;height:326px;background:#e1e1e1"></div>
<div class="r" style="left:663px;top:212px;width:1px;height:326px;background:#e1e1e1"></div>
<div class="r" style="left:1008px;top:212px;width:1px;height:326px;background:#e1e1e1"></div>
<div class="r" style="left:19px;top:212px;width:989px;height:1px;background:#3f3f3f"></div>
<div class="r" style="left:153px;top:166px;width:2px;height:46px;background:#5f6c55"></div>
<div class="r" style="left:288px;top:166px;width:2px;height:46px;background:#5f6c55"></div>
<div class="r" style="left:423px;top:166px;width:2px;height:46px;background:#5f6c55"></div>
<div class="r" style="left:662px;top:166px;width:2px;height:46px;background:#5f6c55"></div>
<div class="t" style="left:21.00px;top:171.25px;font-size:10.1px;line-height:10.1px;color:#1e1e1e;font-weight:bold;transform:scaleX(0.9841);transform-origin:0 0;-webkit-text-stroke:0.3px #1e1e1e">Periodo</div>
<div class="t" style="left:155.80px;top:171.25px;font-size:10.1px;line-height:10.1px;color:#1e1e1e;font-weight:bold;transform:scaleX(0.9458);transform-origin:0 0;-webkit-text-stroke:0.3px #1e1e1e">Código Único de la</div>
<div class="t" style="left:155.80px;top:186.25px;font-size:10.1px;line-height:10.1px;color:#1e1e1e;font-weight:bold;transform:scaleX(0.9643);transform-origin:0 0;-webkit-text-stroke:0.3px #1e1e1e">Operación (CUO)</div>
<div class="t" style="left:291.00px;top:171.25px;font-size:10.1px;line-height:10.1px;color:#1e1e1e;font-weight:bold;transform:scaleX(0.9818);transform-origin:0 0;-webkit-text-stroke:0.3px #1e1e1e">Número correlativo del</div>
<div class="t" style="left:291.00px;top:186.25px;font-size:10.1px;line-height:10.1px;color:#1e1e1e;font-weight:bold;transform:scaleX(0.9663);transform-origin:0 0;-webkit-text-stroke:0.3px #1e1e1e">asiento contable</div>
<div class="t" style="left:425.50px;top:171.25px;font-size:10.1px;line-height:10.1px;color:#1e1e1e;font-weight:bold;transform:scaleX(0.9545);transform-origin:0 0;-webkit-text-stroke:0.3px #1e1e1e">Código de la cuenta contable desagregado en</div>
<div class="t" style="left:425.50px;top:186.25px;font-size:10.1px;line-height:10.1px;color:#1e1e1e;font-weight:bold;transform:scaleX(0.9610);transform-origin:0 0;-webkit-text-stroke:0.3px #1e1e1e">subcuentas al nivel máximo de dígitos utilizado</div>
<div class="r" style="left:664px;top:166px;width:344px;height:46px;overflow:hidden">
<div class="t" style="left:1.30px;top:5.25px;font-size:10.1px;line-height:10.1px;color:#1e1e1e;font-weight:bold;transform:scaleX(0.9545);transform-origin:0 0;-webkit-text-stroke:0.3px #1e1e1e">Código de la Unidad de Operación, de la Unidad Económica Administrativa, de la Unidad de</div>
<div class="t" style="left:1.30px;top:20.25px;font-size:10.1px;line-height:10.1px;color:#1e1e1e;font-weight:bold;transform:scaleX(0.9525);transform-origin:0 0;-webkit-text-stroke:0.3px #1e1e1e">Negocio, de la Unidad de Producción, de la Línea, de la Concesión, del Local o del Lote</div>
</div>
<div class="t" style="left:7.50px;top:202.05px;font-size:8.8px;line-height:8.8px;color:#666;font-weight:normal;">1</div>
<div class="r" style="left:0;top:213px;width:1008px;height:325px;overflow:hidden">
<div class="t" style="left:7.10px;top:3.10px;font-size:9.8px;line-height:9.8px;color:#666;font-weight:normal;transform:scaleX(0.9542);transform-origin:0 0;">2</div>
<div class="t" style="left:21.20px;top:2.85px;font-size:10.1px;line-height:10.1px;color:#262626;font-weight:normal;transform:scaleX(0.9347);transform-origin:0 0;">20250500</div>
<div class="t" style="left:155.80px;top:2.85px;font-size:10.1px;line-height:10.1px;color:#262626;font-weight:normal;transform:scaleX(0.9289);transform-origin:0 0;">FC01-00000003</div>
<div class="t" style="left:291.00px;top:2.85px;font-size:10.1px;line-height:10.1px;color:#262626;font-weight:normal;transform:scaleX(0.9633);transform-origin:0 0;">M000000001</div>
<div class="t" style="left:425.50px;top:2.85px;font-size:10.1px;line-height:10.1px;color:#262626;font-weight:normal;transform:scaleX(0.9411);transform-origin:0 0;">7012100</div>
<svg class="r" style="left:19.5px;top:0px" width="5" height="5"><path d="M0 0 H5 L0 5 Z" fill="#1e7b3a"/></svg>
<svg class="r" style="left:424px;top:0px" width="5" height="5"><path d="M0 0 H5 L0 5 Z" fill="#1e7b3a"/></svg>
<div class="t" style="left:7.10px;top:18.10px;font-size:9.8px;line-height:9.8px;color:#666;font-weight:normal;transform:scaleX(0.9542);transform-origin:0 0;">3</div>
<div class="t" style="left:21.20px;top:17.85px;font-size:10.1px;line-height:10.1px;color:#262626;font-weight:normal;transform:scaleX(0.9347);transform-origin:0 0;">20250500</div>
<div class="t" style="left:155.80px;top:17.85px;font-size:10.1px;line-height:10.1px;color:#262626;font-weight:normal;transform:scaleX(0.9289);transform-origin:0 0;">FC01-00000003</div>
<div class="t" style="left:291.00px;top:17.85px;font-size:10.1px;line-height:10.1px;color:#262626;font-weight:normal;transform:scaleX(0.9633);transform-origin:0 0;">M000000002</div>
<div class="t" style="left:425.50px;top:17.85px;font-size:10.1px;line-height:10.1px;color:#262626;font-weight:normal;transform:scaleX(0.9784);transform-origin:0 0;">4011100</div>
<svg class="r" style="left:19.5px;top:15px" width="5" height="5"><path d="M0 0 H5 L0 5 Z" fill="#1e7b3a"/></svg>
<svg class="r" style="left:424px;top:15px" width="5" height="5"><path d="M0 0 H5 L0 5 Z" fill="#1e7b3a"/></svg>
<div class="t" style="left:7.10px;top:33.10px;font-size:9.8px;line-height:9.8px;color:#666;font-weight:normal;transform:scaleX(0.9542);transform-origin:0 0;">4</div>
<div class="t" style="left:21.20px;top:32.85px;font-size:10.1px;line-height:10.1px;color:#262626;font-weight:normal;transform:scaleX(0.9347);transform-origin:0 0;">20250500</div>
<div class="t" style="left:155.80px;top:32.85px;font-size:10.1px;line-height:10.1px;color:#262626;font-weight:normal;transform:scaleX(0.9692);transform-origin:0 0;">STJ/2025/05/0001</div>
<div class="t" style="left:291.00px;top:32.85px;font-size:10.1px;line-height:10.1px;color:#262626;font-weight:normal;transform:scaleX(0.9633);transform-origin:0 0;">M000000001</div>
<div class="t" style="left:425.50px;top:32.85px;font-size:10.1px;line-height:10.1px;color:#262626;font-weight:normal;transform:scaleX(0.9784);transform-origin:0 0;">2011100</div>
<svg class="r" style="left:19.5px;top:30px" width="5" height="5"><path d="M0 0 H5 L0 5 Z" fill="#1e7b3a"/></svg>
<svg class="r" style="left:424px;top:30px" width="5" height="5"><path d="M0 0 H5 L0 5 Z" fill="#1e7b3a"/></svg>
<div class="t" style="left:7.10px;top:48.10px;font-size:9.8px;line-height:9.8px;color:#666;font-weight:normal;transform:scaleX(0.9542);transform-origin:0 0;">5</div>
<div class="t" style="left:21.20px;top:47.85px;font-size:10.1px;line-height:10.1px;color:#262626;font-weight:normal;transform:scaleX(0.9347);transform-origin:0 0;">20250500</div>
<div class="t" style="left:155.80px;top:47.85px;font-size:10.1px;line-height:10.1px;color:#262626;font-weight:normal;transform:scaleX(0.9692);transform-origin:0 0;">STJ/2025/05/0001</div>
<div class="t" style="left:291.00px;top:47.85px;font-size:10.1px;line-height:10.1px;color:#262626;font-weight:normal;transform:scaleX(0.9633);transform-origin:0 0;">M000000002</div>
<div class="t" style="left:425.50px;top:47.85px;font-size:10.1px;line-height:10.1px;color:#262626;font-weight:normal;transform:scaleX(0.9784);transform-origin:0 0;">6911100</div>
<svg class="r" style="left:19.5px;top:45px" width="5" height="5"><path d="M0 0 H5 L0 5 Z" fill="#1e7b3a"/></svg>
<svg class="r" style="left:424px;top:45px" width="5" height="5"><path d="M0 0 H5 L0 5 Z" fill="#1e7b3a"/></svg>
<div class="t" style="left:7.10px;top:63.10px;font-size:9.8px;line-height:9.8px;color:#666;font-weight:normal;transform:scaleX(0.9542);transform-origin:0 0;">6</div>
<div class="t" style="left:21.20px;top:62.85px;font-size:10.1px;line-height:10.1px;color:#262626;font-weight:normal;transform:scaleX(0.9347);transform-origin:0 0;">20250500</div>
<div class="t" style="left:155.80px;top:62.85px;font-size:10.1px;line-height:10.1px;color:#262626;font-weight:normal;transform:scaleX(0.9692);transform-origin:0 0;">STJ/2025/05/0002</div>
<div class="t" style="left:291.00px;top:62.85px;font-size:10.1px;line-height:10.1px;color:#262626;font-weight:normal;transform:scaleX(0.9633);transform-origin:0 0;">M000000001</div>
<div class="t" style="left:425.50px;top:62.85px;font-size:10.1px;line-height:10.1px;color:#262626;font-weight:normal;transform:scaleX(0.9784);transform-origin:0 0;">2011100</div>
<svg class="r" style="left:19.5px;top:60px" width="5" height="5"><path d="M0 0 H5 L0 5 Z" fill="#1e7b3a"/></svg>
<svg class="r" style="left:424px;top:60px" width="5" height="5"><path d="M0 0 H5 L0 5 Z" fill="#1e7b3a"/></svg>
<div class="t" style="left:7.10px;top:78.10px;font-size:9.8px;line-height:9.8px;color:#666;font-weight:normal;transform:scaleX(0.9542);transform-origin:0 0;">7</div>
<div class="t" style="left:21.20px;top:77.85px;font-size:10.1px;line-height:10.1px;color:#262626;font-weight:normal;transform:scaleX(0.9347);transform-origin:0 0;">20250500</div>
<div class="t" style="left:155.80px;top:77.85px;font-size:10.1px;line-height:10.1px;color:#262626;font-weight:normal;transform:scaleX(0.9692);transform-origin:0 0;">STJ/2025/05/0002</div>
<div class="t" style="left:291.00px;top:77.85px;font-size:10.1px;line-height:10.1px;color:#262626;font-weight:normal;transform:scaleX(0.9633);transform-origin:0 0;">M000000002</div>
<div class="t" style="left:425.50px;top:77.85px;font-size:10.1px;line-height:10.1px;color:#262626;font-weight:normal;transform:scaleX(0.9784);transform-origin:0 0;">6911100</div>
<svg class="r" style="left:19.5px;top:75px" width="5" height="5"><path d="M0 0 H5 L0 5 Z" fill="#1e7b3a"/></svg>
<svg class="r" style="left:424px;top:75px" width="5" height="5"><path d="M0 0 H5 L0 5 Z" fill="#1e7b3a"/></svg>
<div class="t" style="left:7.10px;top:93.10px;font-size:9.8px;line-height:9.8px;color:#666;font-weight:normal;transform:scaleX(0.9542);transform-origin:0 0;">8</div>
<div class="t" style="left:21.20px;top:92.85px;font-size:10.1px;line-height:10.1px;color:#262626;font-weight:normal;transform:scaleX(0.9347);transform-origin:0 0;">20250500</div>
<div class="t" style="left:155.80px;top:92.85px;font-size:10.1px;line-height:10.1px;color:#262626;font-weight:normal;transform:scaleX(0.9692);transform-origin:0 0;">STJ/2025/05/0003</div>
<div class="t" style="left:291.00px;top:92.85px;font-size:10.1px;line-height:10.1px;color:#262626;font-weight:normal;transform:scaleX(0.9633);transform-origin:0 0;">M000000001</div>
<div class="t" style="left:425.50px;top:92.85px;font-size:10.1px;line-height:10.1px;color:#262626;font-weight:normal;transform:scaleX(0.9784);transform-origin:0 0;">2011100</div>
<svg class="r" style="left:19.5px;top:90px" width="5" height="5"><path d="M0 0 H5 L0 5 Z" fill="#1e7b3a"/></svg>
<svg class="r" style="left:424px;top:90px" width="5" height="5"><path d="M0 0 H5 L0 5 Z" fill="#1e7b3a"/></svg>
<div class="t" style="left:7.10px;top:108.10px;font-size:9.8px;line-height:9.8px;color:#666;font-weight:normal;transform:scaleX(0.9542);transform-origin:0 0;">9</div>
<div class="t" style="left:21.20px;top:107.85px;font-size:10.1px;line-height:10.1px;color:#262626;font-weight:normal;transform:scaleX(0.9347);transform-origin:0 0;">20250500</div>
<div class="t" style="left:155.80px;top:107.85px;font-size:10.1px;line-height:10.1px;color:#262626;font-weight:normal;transform:scaleX(0.9692);transform-origin:0 0;">STJ/2025/05/0003</div>
<div class="t" style="left:291.00px;top:107.85px;font-size:10.1px;line-height:10.1px;color:#262626;font-weight:normal;transform:scaleX(0.9633);transform-origin:0 0;">M000000002</div>
<div class="t" style="left:425.50px;top:107.85px;font-size:10.1px;line-height:10.1px;color:#262626;font-weight:normal;transform:scaleX(0.9784);transform-origin:0 0;">6911100</div>
<svg class="r" style="left:19.5px;top:105px" width="5" height="5"><path d="M0 0 H5 L0 5 Z" fill="#1e7b3a"/></svg>
<svg class="r" style="left:424px;top:105px" width="5" height="5"><path d="M0 0 H5 L0 5 Z" fill="#1e7b3a"/></svg>
<div class="t" style="left:4.40px;top:123.10px;font-size:9.8px;line-height:9.8px;color:#666;font-weight:normal;transform:scaleX(0.9542);transform-origin:0 0;">10</div>
<div class="t" style="left:21.20px;top:122.85px;font-size:10.1px;line-height:10.1px;color:#262626;font-weight:normal;transform:scaleX(0.9347);transform-origin:0 0;">20250500</div>
<div class="t" style="left:155.80px;top:122.85px;font-size:10.1px;line-height:10.1px;color:#262626;font-weight:normal;transform:scaleX(0.9692);transform-origin:0 0;">STJ/2025/05/0004</div>
<div class="t" style="left:291.00px;top:122.85px;font-size:10.1px;line-height:10.1px;color:#262626;font-weight:normal;transform:scaleX(0.9633);transform-origin:0 0;">M000000001</div>
<div class="t" style="left:425.50px;top:122.85px;font-size:10.1px;line-height:10.1px;color:#262626;font-weight:normal;transform:scaleX(0.9784);transform-origin:0 0;">6111000</div>
<svg class="r" style="left:19.5px;top:120px" width="5" height="5"><path d="M0 0 H5 L0 5 Z" fill="#1e7b3a"/></svg>
<svg class="r" style="left:424px;top:120px" width="5" height="5"><path d="M0 0 H5 L0 5 Z" fill="#1e7b3a"/></svg>
<div class="t" style="left:4.40px;top:138.10px;font-size:9.8px;line-height:9.8px;color:#666;font-weight:normal;transform:scaleX(1.0224);transform-origin:0 0;">11</div>
<div class="t" style="left:21.20px;top:137.85px;font-size:10.1px;line-height:10.1px;color:#262626;font-weight:normal;transform:scaleX(0.9347);transform-origin:0 0;">20250500</div>
<div class="t" style="left:155.80px;top:137.85px;font-size:10.1px;line-height:10.1px;color:#262626;font-weight:normal;transform:scaleX(0.9692);transform-origin:0 0;">STJ/2025/05/0004</div>
<div class="t" style="left:291.00px;top:137.85px;font-size:10.1px;line-height:10.1px;color:#262626;font-weight:normal;transform:scaleX(0.9633);transform-origin:0 0;">M000000002</div>
<div class="t" style="left:425.50px;top:137.85px;font-size:10.1px;line-height:10.1px;color:#262626;font-weight:normal;transform:scaleX(0.9784);transform-origin:0 0;">2011100</div>
<svg class="r" style="left:19.5px;top:135px" width="5" height="5"><path d="M0 0 H5 L0 5 Z" fill="#1e7b3a"/></svg>
<svg class="r" style="left:424px;top:135px" width="5" height="5"><path d="M0 0 H5 L0 5 Z" fill="#1e7b3a"/></svg>
<div class="t" style="left:4.40px;top:153.10px;font-size:9.8px;line-height:9.8px;color:#666;font-weight:normal;transform:scaleX(0.9542);transform-origin:0 0;">12</div>
<div class="t" style="left:21.20px;top:152.85px;font-size:10.1px;line-height:10.1px;color:#262626;font-weight:normal;transform:scaleX(0.9347);transform-origin:0 0;">20250500</div>
<div class="t" style="left:155.80px;top:152.85px;font-size:10.1px;line-height:10.1px;color:#262626;font-weight:normal;transform:scaleX(0.9692);transform-origin:0 0;">STJ/2025/05/0005</div>
<div class="t" style="left:291.00px;top:152.85px;font-size:10.1px;line-height:10.1px;color:#262626;font-weight:normal;transform:scaleX(0.9633);transform-origin:0 0;">M000000001</div>
<div class="t" style="left:425.50px;top:152.85px;font-size:10.1px;line-height:10.1px;color:#262626;font-weight:normal;transform:scaleX(0.9784);transform-origin:0 0;">2011100</div>
<svg class="r" style="left:19.5px;top:150px" width="5" height="5"><path d="M0 0 H5 L0 5 Z" fill="#1e7b3a"/></svg>
<svg class="r" style="left:424px;top:150px" width="5" height="5"><path d="M0 0 H5 L0 5 Z" fill="#1e7b3a"/></svg>
<div class="t" style="left:4.40px;top:168.10px;font-size:9.8px;line-height:9.8px;color:#666;font-weight:normal;transform:scaleX(0.9542);transform-origin:0 0;">13</div>
<div class="t" style="left:21.20px;top:167.85px;font-size:10.1px;line-height:10.1px;color:#262626;font-weight:normal;transform:scaleX(0.9347);transform-origin:0 0;">20250500</div>
<div class="t" style="left:155.80px;top:167.85px;font-size:10.1px;line-height:10.1px;color:#262626;font-weight:normal;transform:scaleX(0.9692);transform-origin:0 0;">STJ/2025/05/0005</div>
<div class="t" style="left:291.00px;top:167.85px;font-size:10.1px;line-height:10.1px;color:#262626;font-weight:normal;transform:scaleX(0.9633);transform-origin:0 0;">M000000002</div>
<div class="t" style="left:425.50px;top:167.85px;font-size:10.1px;line-height:10.1px;color:#262626;font-weight:normal;transform:scaleX(0.9784);transform-origin:0 0;">6911100</div>
<svg class="r" style="left:19.5px;top:165px" width="5" height="5"><path d="M0 0 H5 L0 5 Z" fill="#1e7b3a"/></svg>
<svg class="r" style="left:424px;top:165px" width="5" height="5"><path d="M0 0 H5 L0 5 Z" fill="#1e7b3a"/></svg>
<div class="t" style="left:4.40px;top:183.10px;font-size:9.8px;line-height:9.8px;color:#666;font-weight:normal;transform:scaleX(0.9542);transform-origin:0 0;">14</div>
<div class="t" style="left:21.20px;top:182.85px;font-size:10.1px;line-height:10.1px;color:#262626;font-weight:normal;transform:scaleX(0.9347);transform-origin:0 0;">20250500</div>
<div class="t" style="left:155.80px;top:182.85px;font-size:10.1px;line-height:10.1px;color:#262626;font-weight:normal;transform:scaleX(0.9692);transform-origin:0 0;">STJ/2025/05/0006</div>
<div class="t" style="left:291.00px;top:182.85px;font-size:10.1px;line-height:10.1px;color:#262626;font-weight:normal;transform:scaleX(0.9633);transform-origin:0 0;">M000000001</div>
<div class="t" style="left:425.50px;top:182.85px;font-size:10.1px;line-height:10.1px;color:#262626;font-weight:normal;transform:scaleX(0.9784);transform-origin:0 0;">2011100</div>
<svg class="r" style="left:19.5px;top:180px" width="5" height="5"><path d="M0 0 H5 L0 5 Z" fill="#1e7b3a"/></svg>
<svg class="r" style="left:424px;top:180px" width="5" height="5"><path d="M0 0 H5 L0 5 Z" fill="#1e7b3a"/></svg>
<div class="t" style="left:4.40px;top:198.10px;font-size:9.8px;line-height:9.8px;color:#666;font-weight:normal;transform:scaleX(0.9542);transform-origin:0 0;">15</div>
<div class="t" style="left:21.20px;top:197.85px;font-size:10.1px;line-height:10.1px;color:#262626;font-weight:normal;transform:scaleX(0.9347);transform-origin:0 0;">20250500</div>
<div class="t" style="left:155.80px;top:197.85px;font-size:10.1px;line-height:10.1px;color:#262626;font-weight:normal;transform:scaleX(0.9692);transform-origin:0 0;">STJ/2025/05/0006</div>
<div class="t" style="left:291.00px;top:197.85px;font-size:10.1px;line-height:10.1px;color:#262626;font-weight:normal;transform:scaleX(0.9633);transform-origin:0 0;">M000000002</div>
<div class="t" style="left:425.50px;top:197.85px;font-size:10.1px;line-height:10.1px;color:#262626;font-weight:normal;transform:scaleX(0.9784);transform-origin:0 0;">6911100</div>
<svg class="r" style="left:19.5px;top:195px" width="5" height="5"><path d="M0 0 H5 L0 5 Z" fill="#1e7b3a"/></svg>
<svg class="r" style="left:424px;top:195px" width="5" height="5"><path d="M0 0 H5 L0 5 Z" fill="#1e7b3a"/></svg>
<div class="t" style="left:4.40px;top:213.10px;font-size:9.8px;line-height:9.8px;color:#666;font-weight:normal;transform:scaleX(0.9542);transform-origin:0 0;">16</div>
<div class="t" style="left:21.20px;top:212.85px;font-size:10.1px;line-height:10.1px;color:#262626;font-weight:normal;transform:scaleX(0.9347);transform-origin:0 0;">20250500</div>
<div class="t" style="left:155.80px;top:212.85px;font-size:10.1px;line-height:10.1px;color:#262626;font-weight:normal;transform:scaleX(0.9692);transform-origin:0 0;">STJ/2025/05/0007</div>
<div class="t" style="left:291.00px;top:212.85px;font-size:10.1px;line-height:10.1px;color:#262626;font-weight:normal;transform:scaleX(0.9633);transform-origin:0 0;">M000000001</div>
<div class="t" style="left:425.50px;top:212.85px;font-size:10.1px;line-height:10.1px;color:#262626;font-weight:normal;transform:scaleX(0.9784);transform-origin:0 0;">6111000</div>
<svg class="r" style="left:19.5px;top:210px" width="5" height="5"><path d="M0 0 H5 L0 5 Z" fill="#1e7b3a"/></svg>
<svg class="r" style="left:424px;top:210px" width="5" height="5"><path d="M0 0 H5 L0 5 Z" fill="#1e7b3a"/></svg>
<div class="t" style="left:4.40px;top:228.10px;font-size:9.8px;line-height:9.8px;color:#666;font-weight:normal;transform:scaleX(0.9542);transform-origin:0 0;">17</div>
<div class="t" style="left:21.20px;top:227.85px;font-size:10.1px;line-height:10.1px;color:#262626;font-weight:normal;transform:scaleX(0.9347);transform-origin:0 0;">20250500</div>
<div class="t" style="left:155.80px;top:227.85px;font-size:10.1px;line-height:10.1px;color:#262626;font-weight:normal;transform:scaleX(0.9692);transform-origin:0 0;">STJ/2025/05/0007</div>
<div class="t" style="left:291.00px;top:227.85px;font-size:10.1px;line-height:10.1px;color:#262626;font-weight:normal;transform:scaleX(0.9633);transform-origin:0 0;">M000000002</div>
<div class="t" style="left:425.50px;top:227.85px;font-size:10.1px;line-height:10.1px;color:#262626;font-weight:normal;transform:scaleX(0.9784);transform-origin:0 0;">2011100</div>
<svg class="r" style="left:19.5px;top:225px" width="5" height="5"><path d="M0 0 H5 L0 5 Z" fill="#1e7b3a"/></svg>
<svg class="r" style="left:424px;top:225px" width="5" height="5"><path d="M0 0 H5 L0 5 Z" fill="#1e7b3a"/></svg>
<div class="t" style="left:4.40px;top:243.10px;font-size:9.8px;line-height:9.8px;color:#666;font-weight:normal;transform:scaleX(0.9542);transform-origin:0 0;">18</div>
<div class="t" style="left:21.20px;top:242.85px;font-size:10.1px;line-height:10.1px;color:#262626;font-weight:normal;transform:scaleX(0.9347);transform-origin:0 0;">20250500</div>
<div class="t" style="left:155.80px;top:242.85px;font-size:10.1px;line-height:10.1px;color:#262626;font-weight:normal;transform:scaleX(0.9692);transform-origin:0 0;">STJ/2025/05/0008</div>
<div class="t" style="left:291.00px;top:242.85px;font-size:10.1px;line-height:10.1px;color:#262626;font-weight:normal;transform:scaleX(0.9633);transform-origin:0 0;">M000000001</div>
<div class="t" style="left:425.50px;top:242.85px;font-size:10.1px;line-height:10.1px;color:#262626;font-weight:normal;transform:scaleX(0.9784);transform-origin:0 0;">2011100</div>
<svg class="r" style="left:19.5px;top:240px" width="5" height="5"><path d="M0 0 H5 L0 5 Z" fill="#1e7b3a"/></svg>
<svg class="r" style="left:424px;top:240px" width="5" height="5"><path d="M0 0 H5 L0 5 Z" fill="#1e7b3a"/></svg>
<div class="t" style="left:4.40px;top:258.10px;font-size:9.8px;line-height:9.8px;color:#666;font-weight:normal;transform:scaleX(0.9542);transform-origin:0 0;">19</div>
<div class="t" style="left:21.20px;top:257.85px;font-size:10.1px;line-height:10.1px;color:#262626;font-weight:normal;transform:scaleX(0.9347);transform-origin:0 0;">20250500</div>
<div class="t" style="left:155.80px;top:257.85px;font-size:10.1px;line-height:10.1px;color:#262626;font-weight:normal;transform:scaleX(0.9692);transform-origin:0 0;">STJ/2025/05/0008</div>
<div class="t" style="left:291.00px;top:257.85px;font-size:10.1px;line-height:10.1px;color:#262626;font-weight:normal;transform:scaleX(0.9633);transform-origin:0 0;">M000000002</div>
<div class="t" style="left:425.50px;top:257.85px;font-size:10.1px;line-height:10.1px;color:#262626;font-weight:normal;transform:scaleX(0.9784);transform-origin:0 0;">6911100</div>
<svg class="r" style="left:19.5px;top:255px" width="5" height="5"><path d="M0 0 H5 L0 5 Z" fill="#1e7b3a"/></svg>
<svg class="r" style="left:424px;top:255px" width="5" height="5"><path d="M0 0 H5 L0 5 Z" fill="#1e7b3a"/></svg>
<div class="t" style="left:4.40px;top:273.10px;font-size:9.8px;line-height:9.8px;color:#666;font-weight:normal;transform:scaleX(0.9542);transform-origin:0 0;">20</div>
<div class="t" style="left:21.20px;top:272.85px;font-size:10.1px;line-height:10.1px;color:#262626;font-weight:normal;transform:scaleX(0.9347);transform-origin:0 0;">20250500</div>
<div class="t" style="left:155.80px;top:272.85px;font-size:10.1px;line-height:10.1px;color:#262626;font-weight:normal;transform:scaleX(0.9167);transform-origin:0 0;">FCCO-00000001</div>
<div class="t" style="left:291.00px;top:272.85px;font-size:10.1px;line-height:10.1px;color:#262626;font-weight:normal;transform:scaleX(0.9633);transform-origin:0 0;">M000000001</div>
<div class="t" style="left:425.50px;top:272.85px;font-size:10.1px;line-height:10.1px;color:#262626;font-weight:normal;transform:scaleX(0.9411);transform-origin:0 0;">6329000</div>
<svg class="r" style="left:19.5px;top:270px" width="5" height="5"><path d="M0 0 H5 L0 5 Z" fill="#1e7b3a"/></svg>
<svg class="r" style="left:424px;top:270px" width="5" height="5"><path d="M0 0 H5 L0 5 Z" fill="#1e7b3a"/></svg>
<div class="t" style="left:4.40px;top:288.10px;font-size:9.8px;line-height:9.8px;color:#666;font-weight:normal;transform:scaleX(0.9542);transform-origin:0 0;">21</div>
<div class="t" style="left:21.20px;top:287.85px;font-size:10.1px;line-height:10.1px;color:#262626;font-weight:normal;transform:scaleX(0.9347);transform-origin:0 0;">20250500</div>
<div class="t" style="left:155.80px;top:287.85px;font-size:10.1px;line-height:10.1px;color:#262626;font-weight:normal;transform:scaleX(0.9167);transform-origin:0 0;">FCCO-00000001</div>
<div class="t" style="left:291.00px;top:287.85px;font-size:10.1px;line-height:10.1px;color:#262626;font-weight:normal;transform:scaleX(0.9633);transform-origin:0 0;">M000000002</div>
<div class="t" style="left:425.50px;top:287.85px;font-size:10.1px;line-height:10.1px;color:#262626;font-weight:normal;transform:scaleX(0.9784);transform-origin:0 0;">4011100</div>
<svg class="r" style="left:19.5px;top:285px" width="5" height="5"><path d="M0 0 H5 L0 5 Z" fill="#1e7b3a"/></svg>
<svg class="r" style="left:424px;top:285px" width="5" height="5"><path d="M0 0 H5 L0 5 Z" fill="#1e7b3a"/></svg>
<div class="t" style="left:4.40px;top:303.10px;font-size:9.8px;line-height:9.8px;color:#666;font-weight:normal;transform:scaleX(0.9542);transform-origin:0 0;">22</div>
<div class="t" style="left:21.20px;top:302.85px;font-size:10.1px;line-height:10.1px;color:#262626;font-weight:normal;transform:scaleX(0.9347);transform-origin:0 0;">20250500</div>
<div class="t" style="left:155.80px;top:302.85px;font-size:10.1px;line-height:10.1px;color:#262626;font-weight:normal;transform:scaleX(0.9167);transform-origin:0 0;">FCCO-00000002</div>
<div class="t" style="left:291.00px;top:302.85px;font-size:10.1px;line-height:10.1px;color:#262626;font-weight:normal;transform:scaleX(0.9633);transform-origin:0 0;">M000000001</div>
<div class="t" style="left:425.50px;top:302.85px;font-size:10.1px;line-height:10.1px;color:#262626;font-weight:normal;transform:scaleX(0.9411);transform-origin:0 0;">6329000</div>
<svg class="r" style="left:19.5px;top:300px" width="5" height="5"><path d="M0 0 H5 L0 5 Z" fill="#1e7b3a"/></svg>
<svg class="r" style="left:424px;top:300px" width="5" height="5"><path d="M0 0 H5 L0 5 Z" fill="#1e7b3a"/></svg>
<div class="t" style="left:4.40px;top:318.10px;font-size:9.8px;line-height:9.8px;color:#666;font-weight:normal;transform:scaleX(0.9542);transform-origin:0 0;">23</div>
<div class="t" style="left:21.20px;top:317.85px;font-size:10.1px;line-height:10.1px;color:#262626;font-weight:normal;transform:scaleX(0.9347);transform-origin:0 0;">20250500</div>
<div class="t" style="left:155.80px;top:317.85px;font-size:10.1px;line-height:10.1px;color:#262626;font-weight:normal;transform:scaleX(0.9167);transform-origin:0 0;">FCCO-00000002</div>
<div class="t" style="left:291.00px;top:317.85px;font-size:10.1px;line-height:10.1px;color:#262626;font-weight:normal;transform:scaleX(0.9633);transform-origin:0 0;">M000000002</div>
<div class="t" style="left:425.50px;top:317.85px;font-size:10.1px;line-height:10.1px;color:#262626;font-weight:normal;transform:scaleX(0.9784);transform-origin:0 0;">4011100</div>
<svg class="r" style="left:19.5px;top:315px" width="5" height="5"><path d="M0 0 H5 L0 5 Z" fill="#1e7b3a"/></svg>
<svg class="r" style="left:424px;top:315px" width="5" height="5"><path d="M0 0 H5 L0 5 Z" fill="#1e7b3a"/></svg>
</div>
<div class="r" style="left:18px;top:166px;width:137px;height:47.5px;border:2px solid #3a8657;box-sizing:border-box"></div>
<div class="r" style="left:152.5px;top:210.5px;width:4px;height:4px;background:#217346;border:1px solid #fff;box-sizing:content-box;left:151.5px;top:209.5px"></div>
<svg class="r" style="left:492px;top:120px;" width="40" height="40" viewBox="0 0 40 40"><circle cx="20" cy="20" r="19" fill="#f7c623"/><path d="M11.6 8 V30.8" stroke="#222" stroke-width="3.1"/><path d="M5 15.8 Q9.8 13.2 11.9 8.6" fill="none" stroke="#222" stroke-width="2.6"/><ellipse cx="27.75" cy="19.6" rx="6.2" ry="9.9" fill="none" stroke="#222" stroke-width="3"/></svg>
<div class="r" style="left:1008px;top:153px;width:16px;height:385px;background:#fcfcfc"></div>
<div class="r" style="left:1010.5px;top:166px;width:11.5px;height:361px;background:#f0f0f0"></div>
<div class="r" style="left:1007px;top:166px;width:1px;height:372px;background:#c8c8c8"></div>
<div class="r" style="left:1010px;top:154px;width:12px;height:12px;background:#fff;border:1px solid #bdbdbd;box-sizing:border-box"></div>
<svg class="r" style="left:1013px;top:158px;" width="6" height="4" viewBox="0 0 6 4"><path d="M0 3.5 L3 0 L6 3.5 Z" fill="#333"/></svg>
<div class="r" style="left:1010px;top:166px;width:12px;height:135px;background:#fff;border:1px solid #bdbdbd;box-sizing:border-box"></div>
<div class="r" style="left:1010px;top:527px;width:12px;height:11px;background:#fff;border:1px solid #bdbdbd;box-sizing:border-box"></div>
<svg class="r" style="left:1013px;top:531px;" width="6" height="4" viewBox="0 0 6 4"><path d="M0 0 L3 3.5 L6 0 Z" fill="#333"/></svg>
<div class="r" style="left:0px;top:538px;width:1008px;height:1px;background:#c8c8c8"></div>
<div class="r" style="left:0px;top:539px;width:1024px;height:20px;background:#f0f0f0"></div>
<svg class="r" style="left:20px;top:545px;" width="5" height="7" viewBox="0 0 5 7"><path d="M4.5 0 L0.5 3.5 L4.5 7 Z" fill="#c0c0c0"/></svg>
<svg class="r" style="left:41px;top:545px;" width="5" height="7" viewBox="0 0 5 7"><path d="M0.5 0 L4.5 3.5 L0.5 7 Z" fill="#c0c0c0"/></svg>
<div class="r" style="left:75.5px;top:538px;width:180px;height:18px;background:#fff;border-left:1px solid #c6c6c6;border-right:1px solid #c6c6c6;box-sizing:border-box"></div>
<div class="r" style="left:75.5px;top:554.5px;width:180px;height:1.5px;background:#217346"></div>
<div class="t" style="left:84.00px;top:542.68px;font-size:10.3px;line-height:10.3px;color:#217346;font-weight:bold;transform:scaleX(0.9269);transform-origin:0 0;">2060531032120250500050100001111</div>
<svg class="r" style="left:280px;top:542px;" width="12" height="12" viewBox="0 0 12 12"><circle cx="6" cy="6" r="5.3" fill="none" stroke="#777" stroke-width="1"/><path d="M6 3 V9 M3 6 H9" stroke="#777" stroke-width="1.1"/></svg>
<div class="r" style="left:614px;top:545px;width:1px;height:1px;background:#aaa"></div>
<div class="r" style="left:614px;top:548px;width:1px;height:1px;background:#aaa"></div>
<div class="r" style="left:614px;top:551px;width:1px;height:1px;background:#aaa"></div>
<div class="r" style="left:627px;top:543px;width:109px;height:11px;background:#fff;border:1px solid #bdbdbd;box-sizing:border-box"></div>
<div class="r" style="left:637px;top:543px;width:1px;height:11px;background:#bdbdbd"></div>
<svg class="r" style="left:630px;top:545.5px;" width="4" height="6" viewBox="0 0 4 6"><path d="M4 0 L0 3 L4 6 Z" fill="#333"/></svg>
<div class="r" style="left:997px;top:543px;width:11px;height:11px;background:#fff;border:1px solid #bdbdbd;box-sizing:border-box"></div>
<svg class="r" style="left:1001px;top:545.5px;" width="4" height="6" viewBox="0 0 4 6"><path d="M0 0 L4 3 L0 6 Z" fill="#333"/></svg>
<div class="r" style="left:0px;top:559px;width:1024px;height:15px;background:#217346"></div>
<div class="r" style="left:0px;top:574px;width:1024px;height:2px;background:#f3f5f3"></div>
<div class="t" style="left:8.40px;top:562.84px;font-size:9.4px;line-height:9.4px;color:#f0fff4;font-weight:normal;transform:scaleX(0.9066);transform-origin:0 0;-webkit-text-stroke:0.25px #f0fff4">Listo</div>
<svg class="r" style="left:39px;top:561px;" width="14" height="12" viewBox="0 0 14 12"><path d="M7 1 A5 5 0 1 0 12 6" fill="none" stroke="#fff" stroke-width="1" stroke-dasharray="1.5 1"/><path d="M7 3 V6 M5.5 4.5 L7 6 L8.5 4.5" stroke="#fff" stroke-width="1" fill="none"/><path d="M8 9 L10 11 L13.5 6.5" stroke="#fff" stroke-width="1.3" fill="none"/></svg>
<div class="t" style="left:54.80px;top:562.84px;font-size:9.4px;line-height:9.4px;color:#f0fff4;font-weight:normal;transform:scaleX(0.9353);transform-origin:0 0;-webkit-text-stroke:0.25px #f0fff4">Accesibilidad: todo correcto</div>
<div class="r" style="left:799px;top:559px;width:30px;height:15px;background:#0d5a2c"></div>
<svg class="r" style="left:808px;top:561px;" width="11" height="11" viewBox="0 0 11 11"><rect x="0.5" y="0.5" width="10" height="10" fill="none" stroke="#c8e0d0" stroke-width="0.9"/><path d="M3.8 0.5 V10.5 M7.2 0.5 V10.5 M0.5 3.8 H10.5 M0.5 7.2 H10.5" stroke="#c8e0d0" stroke-width="0.8"/></svg>
<svg class="r" style="left:839px;top:561px;" width="11" height="11" viewBox="0 0 11 11"><rect x="0.5" y="0.5" width="10" height="10" fill="none" stroke="#c8e0d0" stroke-width="0.9"/><rect x="2.5" y="2.5" width="6" height="6" fill="none" stroke="#c8e0d0" stroke-width="0.8"/><path d="M4 5.5 H7" stroke="#c8e0d0" stroke-width="0.8"/></svg>
<svg class="r" style="left:868px;top:561px;" width="12" height="11" viewBox="0 0 12 11"><rect x="0.5" y="0.5" width="11" height="10" fill="none" stroke="#c8e0d0" stroke-width="0.9"/><rect x="1" y="1" width="3.5" height="6" fill="#d8ecdf"/><rect x="5.5" y="1" width="3.5" height="6" fill="#d8ecdf"/></svg>
<div class="r" style="left:894px;top:566px;width:5px;height:1px;background:#fff"></div>
<div class="r" style="left:903px;top:566px;width:75px;height:1px;background:#cfe3d6"></div>
<div class="r" style="left:939px;top:562px;width:4.5px;height:9px;background:#fff"></div>
<div class="r" style="left:981px;top:566px;width:7px;height:1px;background:#fff"></div>
<div class="r" style="left:984px;top:563px;width:1px;height:7px;background:#fff"></div>
<div class="t" style="left:997.50px;top:564.05px;font-size:8.8px;line-height:8.8px;color:#f0fff4;font-weight:normal;transform:scaleX(0.9331);transform-origin:0 0;-webkit-text-stroke:0.2px #f0fff4">100%</div>
</body></html>
